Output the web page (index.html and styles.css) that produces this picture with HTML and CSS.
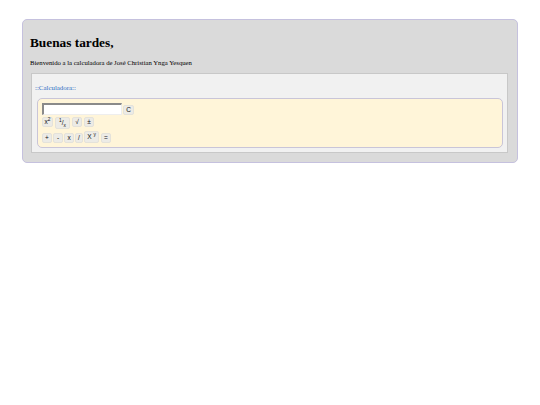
FILE: index.html
```html
<!DOCTYPE html>
<html lang="es">

<head>
    <meta charset="UTF-8">
    <title>Calculadora</title>
    <link rel="stylesheet" href="styles.css">
</head>

<body>
    <div class="wrapper">
        <h1>Buenas tardes,</h1>
        <p class="welcome">Bienvenido a la calculadora de José Christian Ynga Yesquen</p>
        <div class="panel">
            <a class="title" href="#">::Calculadora::</a>
            <div class="calc">
                <div class="row">
                    <input type="text" class="screen">
                    <button class="clear">C</button>
                </div>
                <div class="row top">
                    <button class="wide">x<sup>2</sup></button>
                    <button class="tall"><sup>1</sup>/<sub>x</sub></button>
                    <button>√</button>
                    <button>±</button>
                </div>
                <div class="row bottom">
                    <button>+</button>
                    <button>-</button>
                    <button>x</button>
                    <button class="slim">/</button>
                    <button class="tall">X <sup>y</sup></button>
                    <button class="last">=</button>
                </div>
            </div>
        </div>
    </div>
</body>

</html>
```

FILE: styles.css
```css
* {
    margin: 0;
    padding: 0;
    box-sizing: border-box;
}

body {
    padding: 19px 22px;
    background-color: #fff;
    font-family: "Liberation Serif", serif;
    color: #000;
}

.wrapper {
    width: 496px;
    height: 144px;
    padding: 15px 7px 0;
    background-color: #dadada;
    border: 1px solid #c5c1de;
    border-radius: 5px;
}

h1 {
    font-size: 13.3px;
    line-height: 16px;
    font-weight: bold;
}

.welcome {
    margin-top: 8px;
    font-size: 6.7px;
    line-height: 8px;
}

.panel {
    width: 477px;
    height: 80px;
    margin-top: 6px;
    margin-left: 1px;
    padding: 10px 3px 0;
    background-color: #f1f1f1;
    border: 1px solid #c8c8c8;
}

.title {
    display: block;
    font-size: 6.9px;
    line-height: 8px;
    color: #2f6fc4;
    text-decoration: none;
}

.calc {
    width: 466px;
    height: 50px;
    margin-top: 6px;
    margin-left: 2px;
    padding: 4px;
    background-color: #fff5d9;
    border: 1px solid #c9c5d8;
    border-radius: 5px;
}

.row {
    display: flex;
    align-items: flex-end;
    gap: 1px;
    height: 12px;
}

.row + .row {
    margin-top: 2px;
}

.top {
    align-items: flex-start;
    gap: 2px;
}

.screen {
    width: 80px;
    height: 12px;
    background-color: #fff;
    border: 1px solid #eee;
    border-top: 2px solid #8a8a8a;
    border-left: 2px solid #8a8a8a;
}

button {
    width: 10px;
    height: 10px;
    font-family: "Liberation Sans", sans-serif;
    font-size: 6.5px;
    line-height: 8px;
    color: #111;
    background-color: #ecebe6;
    border: 1px solid #e4e2da;
    border-radius: 2px;
}

button.clear {
    width: 11px;
}

button.wide {
    width: 11px;
}

button.slim {
    width: 8px;
}

button.tall {
    width: 15px;
    height: 12px;
}

button.last {
    margin-left: 1px;
}

sup,
sub {
    font-size: 4.8px;
    line-height: 0;
}
```
